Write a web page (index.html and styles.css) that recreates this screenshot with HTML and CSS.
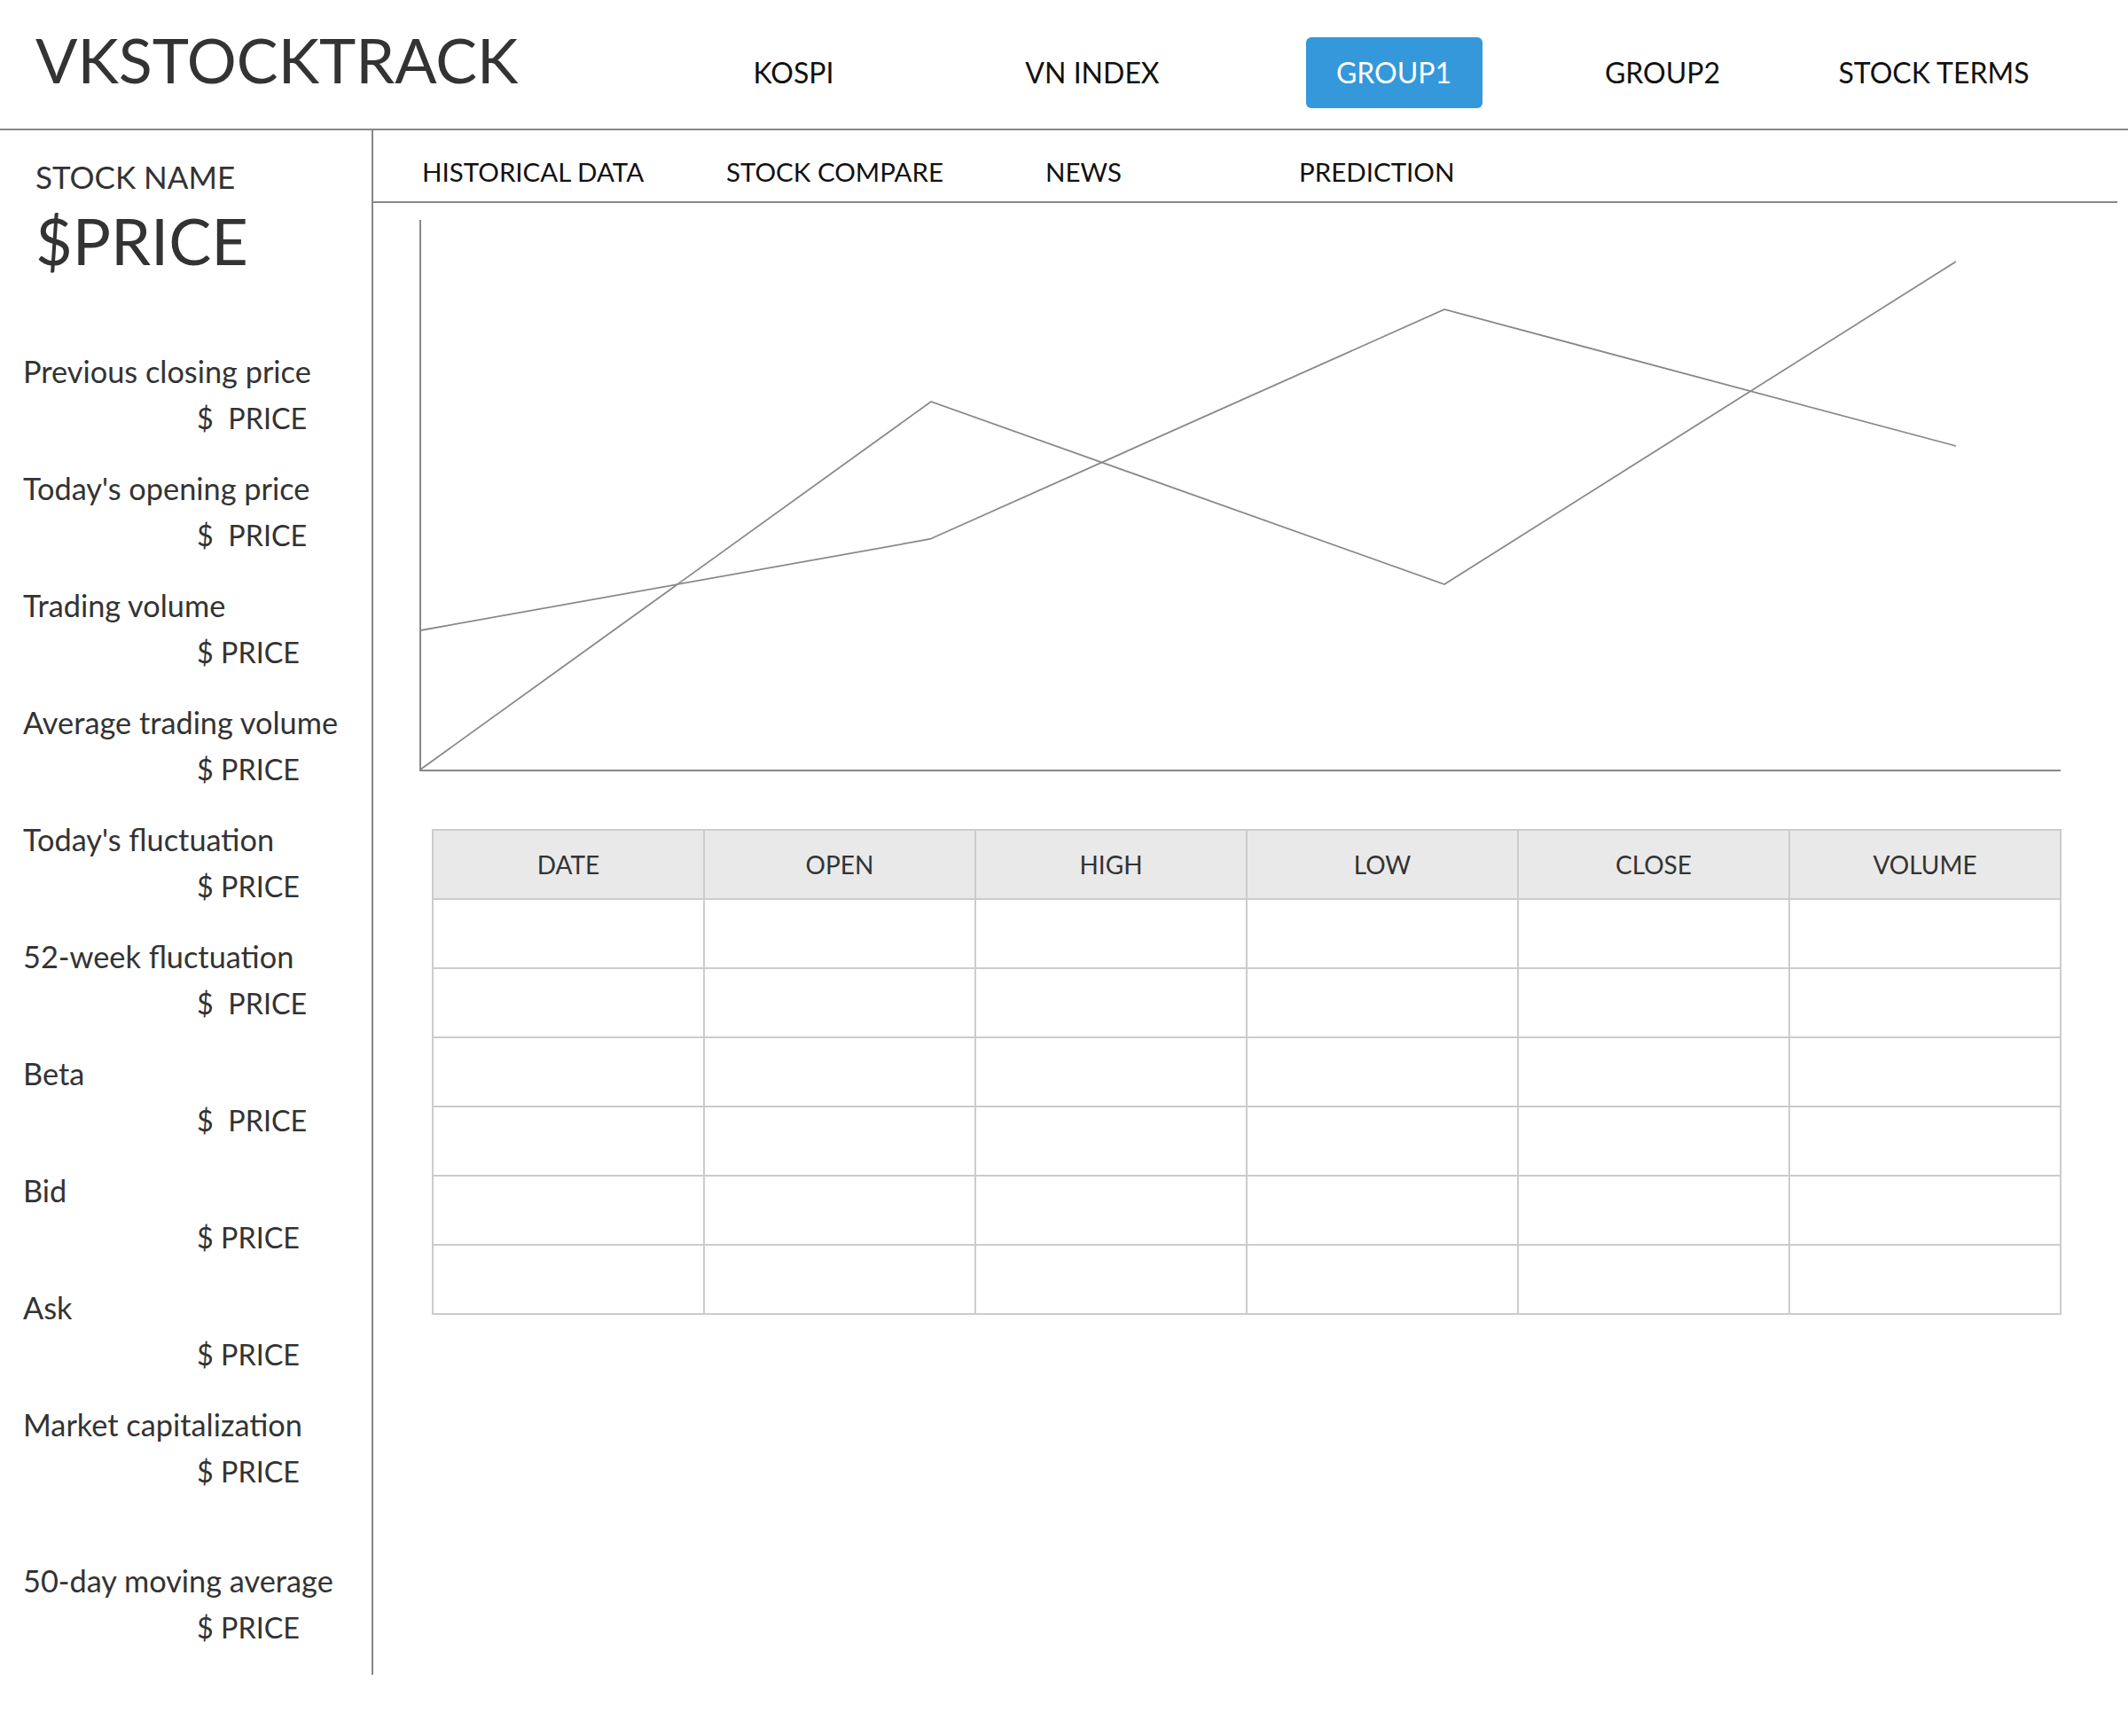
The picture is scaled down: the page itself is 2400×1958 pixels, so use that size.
FILE: index.html
```html
<!DOCTYPE html>
<html lang="en">
<head>
<meta charset="utf-8">
<title>VKSTOCKTRACK</title>
<link rel="stylesheet" href="styles.css">
</head>
<body>
<header class="topbar">
  <div class="logo">VKSTOCKTRACK</div>
  <nav class="mainnav">
    <a class="navitem">KOSPI</a>
    <a class="navitem">VN INDEX</a>
    <a class="navitem active">GROUP1</a>
    <a class="navitem">GROUP2</a>
    <a class="navitem">STOCK TERMS</a>
  </nav>
</header>
<div class="layout">
  <aside class="sidebar">
    <div class="stockname">STOCK NAME</div>
    <div class="bigprice">$PRICE</div>
    <dl class="stats">
      <div class="stat"><dt>Previous closing price</dt><dd>$&nbsp; PRICE</dd></div>
      <div class="stat"><dt>Today's opening price</dt><dd>$&nbsp; PRICE</dd></div>
      <div class="stat"><dt>Trading volume</dt><dd>$ PRICE</dd></div>
      <div class="stat"><dt>Average trading volume</dt><dd>$ PRICE</dd></div>
      <div class="stat"><dt>Today's fluctuation</dt><dd>$ PRICE</dd></div>
      <div class="stat"><dt>52-week fluctuation</dt><dd>$&nbsp; PRICE</dd></div>
      <div class="stat"><dt>Beta</dt><dd>$&nbsp; PRICE</dd></div>
      <div class="stat"><dt>Bid</dt><dd>$ PRICE</dd></div>
      <div class="stat"><dt>Ask</dt><dd>$ PRICE</dd></div>
      <div class="stat"><dt>Market capitalization</dt><dd>$ PRICE</dd></div>
      <div class="stat stat-spaced"><dt>50-day moving average</dt><dd>$ PRICE</dd></div>
    </dl>
  </aside>
  <main class="content">
    <nav class="subnav">
      <a class="subitem">HISTORICAL DATA</a>
      <a class="subitem">STOCK COMPARE</a>
      <a class="subitem">NEWS</a>
      <a class="subitem">PREDICTION</a>
    </nav>
    <svg class="chart" width="1851" height="622" viewBox="0 0 1851 622">
      <polyline class="axis" points="1,0 1,621 1851,621"/>
      <polyline class="series" points="1,620 577,205 1156,411 1733,47"/>
      <polyline class="series" points="1,463 576,360 1156,101 1733,255"/>
    </svg>
    <table class="datatable">
      <thead>
        <tr><th>DATE</th><th>OPEN</th><th>HIGH</th><th>LOW</th><th>CLOSE</th><th>VOLUME</th></tr>
      </thead>
      <tbody>
        <tr><td></td><td></td><td></td><td></td><td></td><td></td></tr>
        <tr><td></td><td></td><td></td><td></td><td></td><td></td></tr>
        <tr><td></td><td></td><td></td><td></td><td></td><td></td></tr>
        <tr><td></td><td></td><td></td><td></td><td></td><td></td></tr>
        <tr><td></td><td></td><td></td><td></td><td></td><td></td></tr>
        <tr><td></td><td></td><td></td><td></td><td></td><td></td></tr>
      </tbody>
    </table>
  </main>
</div>
</body>
</html>
```
FILE: styles.css
```css
* { box-sizing: border-box; }
html, body { margin: 0; padding: 0; background: #fff; }
body {
  font-family: "Lato", "Liberation Sans", sans-serif;
  color: #333;
  width: 2400px;
}

.topbar {
  display: flex;
  align-items: center;
  height: 147px;
  padding-top: 18px;
  border-bottom: 2px solid #888;
}
.logo {
  width: 745px;
  padding-left: 40px;
  margin-top: -30px;
  font-size: 70px;
  font-weight: 400;
  color: #333;
}
.mainnav {
  display: grid;
  grid-template-columns: 300px 374px 306px 300px 312px;
  align-items: center;
  justify-items: center;
}
.navitem {
  font-size: 32px;
  color: #111;
  line-height: 1;
}
.navitem.active {
  width: 199px;
  height: 80px;
  display: flex;
  align-items: center;
  justify-content: center;
  background: #3498db;
  color: #fff;
  border-radius: 6px;
}

.layout {
  display: flex;
  align-items: flex-start;
}
.sidebar {
  width: 421px;
  height: 1742px;
  border-right: 2px solid #888;
  padding-top: 27px;
}
.stockname {
  padding-left: 40px;
  font-size: 35px;
  line-height: 50px;
}
.bigprice {
  padding-left: 40px;
  margin-top: 7px;
  font-size: 72px;
  line-height: 80px;
}
.stats {
  margin: 81px 0 0;
  display: flex;
  flex-direction: column;
  gap: 26px;
}
.stat dt, .stat dd {
  margin: 0;
  line-height: 53px;
  white-space: nowrap;
}
.stat dt { padding-left: 26px; font-size: 34.3px; }
.stat dd { padding-left: 222px; font-size: 32.3px; }
.stat-spaced { margin-top: 44px; }

.content {
  flex: 1;
  margin-right: 12px;
}
.subnav {
  display: grid;
  grid-template-columns: 343px 360px 286px auto;
  align-items: center;
  height: 82px;
  padding-left: 55px;
  padding-top: 12px;
  border-bottom: 2px solid #888;
}
.subitem {
  font-size: 29.5px;
  color: #111;
}
.chart {
  display: block;
  margin: 19px 0 0 52px;
}
.axis, .series {
  fill: none;
  stroke: #888;
  stroke-width: 2;
}
.series { stroke-width: 1.8; }

.datatable {
  margin: 65px 0 0 66px;
  width: 1838px;
  border-collapse: collapse;
  table-layout: fixed;
}
.datatable th, .datatable td {
  border: 2px solid #ccc;
  height: 78px;
  padding: 0;
}
.datatable th {
  background: #e9e9e9;
  font-weight: 400;
  font-size: 28px;
  color: #333;
  text-align: center;
}
```
